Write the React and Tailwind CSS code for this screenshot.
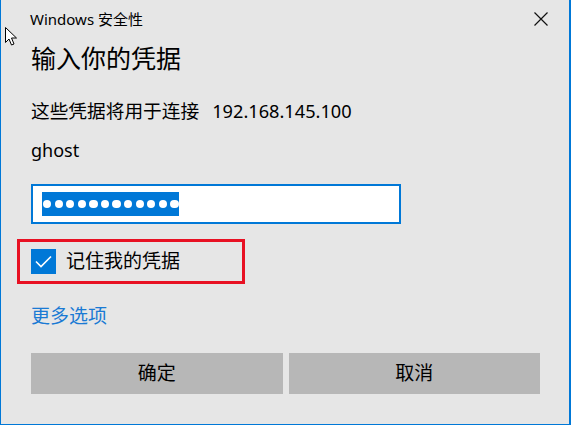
import React from 'react';

const font = { fontFamily: '"Noto Sans", "Noto Sans CJK SC", sans-serif' };

const Cursor = () => (
    <svg className="absolute left-[4px] top-[27px]" width="13" height="19" viewBox="0 0 13 19">
        <path d="M0.5 0.5 L0.5 15.5 L4 12 L6.5 18 L9 17 L6.5 11 L11.5 11 Z" fill="#fff" stroke="#000" strokeWidth="1" />
    </svg>
);

const App = () => {
    const dots = Array.from({ length: 12 });

    return (
        <div
            className="relative w-[571px] h-[425px] bg-[#e6e6e6] border-l border-r-2 border-b border-[#0078d7] text-black overflow-hidden"
            style={font}
        >
            <Cursor />

            {/* Title bar */}
            <div className="h-[38px] flex items-center justify-between pl-[29px] pr-[21px]">
                <span className="text-[15px] leading-none">Windows 安全性</span>
                <svg width="14" height="14" viewBox="0 0 14 14">
                    <path d="M0.5 0.5 L13.5 13.5 M13.5 0.5 L0.5 13.5" stroke="#111" strokeWidth="1.2" />
                </svg>
            </div>

            <div className="pl-[30px] pr-[29px]">
                {/* Heading */}
                <div className="h-[40px] flex items-center text-[25px] leading-none">输入你的凭据</div>

                {/* Target */}
                <div className="mt-[14px] h-[39px] flex items-center leading-none">
                    <span className="text-[18.7px]">这些凭据将用于连接</span>
                    <span className="text-[18.2px] ml-[13px]">192.168.145.100</span>
                </div>

                {/* User name */}
                <div className="h-[38px] flex items-center text-[18px] leading-none">ghost</div>

                {/* Password field */}
                <div className="mt-[15px] w-[370px] h-[40px] border-2 border-[#0078d7] bg-white flex items-center pl-[9px]">
                    <div className="w-[137px] h-[24px] bg-[#0078d7] flex items-center gap-[3.4px] pl-[1px]">
                        {dots.map((_, i) => (
                            <span key={i} className="w-[8.2px] h-[8.2px] rounded-full bg-white" />
                        ))}
                    </div>
                </div>

                {/* Remember (highlighted) */}
                <div className="mt-[15px] -ml-[14px] w-[228px] h-[45px] border-[3px] border-[#e81123] flex items-center pl-[11px]">
                    <div className="w-[25px] h-[25px] bg-[#0078d7] flex items-center justify-center">
                        <svg width="17" height="13" viewBox="0 0 17 13">
                            <path d="M1 6.5 L6 11.5 L16 1.5" fill="none" stroke="#fff" strokeWidth="1.6" />
                        </svg>
                    </div>
                    <span className="ml-[10px] text-[19px] leading-none">记住我的凭据</span>
                </div>

                {/* More options */}
                <div className="mt-[13px] h-[38px] flex items-center text-[19px] leading-none text-[#1a7ad4]">更多选项</div>

                {/* Buttons */}
                <div className="mt-[18px] grid grid-cols-2 gap-[6px] w-[509px]">
                    <button className="h-[41px] bg-[#b7b7b7] text-[19px] leading-none">确定</button>
                    <button className="h-[41px] bg-[#b7b7b7] text-[19px] leading-none">取消</button>
                </div>
            </div>
        </div>
    );
};

export default App;
